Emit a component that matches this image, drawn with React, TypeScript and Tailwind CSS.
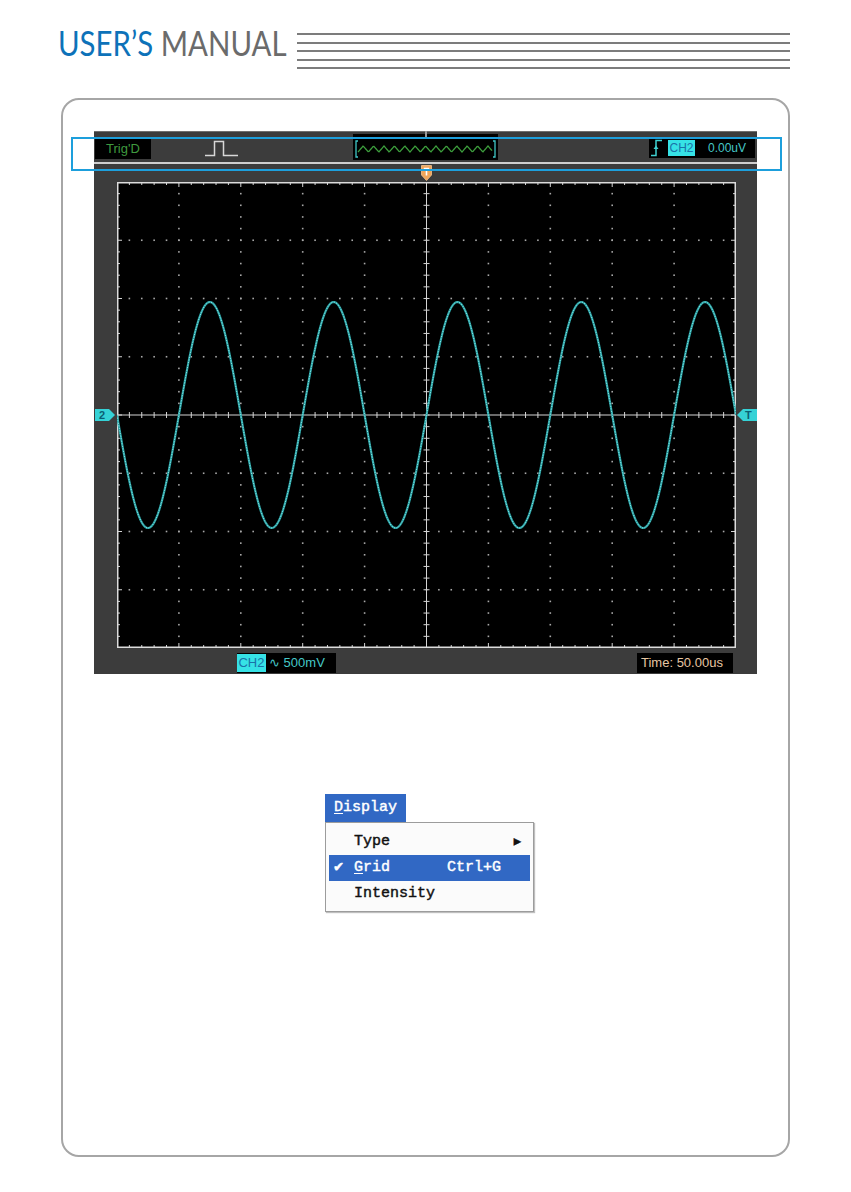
import React from "react";

const GW = 619;
const GH = 466;
const DX = GW / 10;
const DY = GH / 8;

function ScopeGrid() {
  const dots: React.ReactElement[] = [];
  // dotted minor lines
  for (let i = 1; i < 10; i++) {
    if (i === 5) continue;
    const x = i * DX;
    for (let k = 1; k < 40; k++) {
      const y = (k * DY) / 5;
      dots.push(<rect key={`v${i}-${k}`} x={x - 0.8} y={y - 0.8} width={1.6} height={1.6} fill="#a8a8a8" />);
    }
  }
  for (let j = 1; j < 8; j++) {
    if (j === 4) continue;
    const y = j * DY;
    for (let k = 1; k < 50; k++) {
      const x = (k * DX) / 5;
      dots.push(<rect key={`h${j}-${k}`} x={x - 0.8} y={y - 0.8} width={1.6} height={1.6} fill="#a8a8a8" />);
    }
  }
  const ticks: React.ReactElement[] = [];
  for (let k = 1; k < 50; k++) {
    const x = (k * DX) / 5;
    const major = k % 5 === 0;
    const len = major ? 5 : 3;
    ticks.push(<line key={`tt${k}`} x1={x} y1={0} x2={x} y2={len} />);
    ticks.push(<line key={`tb${k}`} x1={x} y1={GH} x2={x} y2={GH - len} />);
    ticks.push(<line key={`tc${k}`} x1={x} y1={GH / 2 - 3} x2={x} y2={GH / 2 + 3} />);
  }
  for (let k = 1; k < 40; k++) {
    const y = (k * DY) / 5;
    const major = k % 5 === 0;
    const len = major ? 5 : 3;
    ticks.push(<line key={`tl${k}`} x1={0} y1={y} x2={len} y2={y} />);
    ticks.push(<line key={`tr${k}`} x1={GW} y1={y} x2={GW - len} y2={y} />);
    ticks.push(<line key={`tm${k}`} x1={GW / 2 - 3} y1={y} x2={GW / 2 + 3} y2={y} />);
  }
  const period = 2 * DX;
  const amp = 113;
  const pts: string[] = [];
  for (let x = 0; x <= GW; x += 1) {
    const y = GH / 2 - amp * Math.sin((2 * Math.PI * (x - GW / 2)) / period);
    pts.push(`${x},${y.toFixed(2)}`);
  }
  const wave = pts.join(" ");
  return (
    <svg width={GW} height={GH} viewBox={`0 0 ${GW} ${GH}`} className="block bg-black shrink-0">
      {dots}
      <g stroke="#d4d4d4" strokeWidth={1}>
        <line x1={0} y1={GH / 2} x2={GW} y2={GH / 2} />
        <line x1={GW / 2} y1={0} x2={GW / 2} y2={GH} />
        {ticks}
      </g>
      <rect x={0.75} y={0.75} width={GW - 1.5} height={GH - 1.5} fill="none" stroke="#dcdcdc" strokeWidth={1.5} />
      <polyline points={wave} fill="none" stroke="#2a9fa2" strokeWidth={2.2} strokeLinejoin="round" />
      <polyline points={wave} fill="none" stroke="#86e8e8" strokeWidth={1} strokeDasharray="1.2 1.4" />
    </svg>
  );
}

function PulseIcon() {
  return (
    <svg width="33" height="17" viewBox="0 0 33 17" className="block">
      <path d="M0 15.5 H9.5 V1.5 H18.5 V15.5 H33" fill="none" stroke="#d8d8d8" strokeWidth="1.5" />
    </svg>
  );
}

function PreviewWave() {
  const pts: string[] = [];
  for (let x = 0; x <= 134; x += 1) {
    const ph = (x / 10.4) % 1;
    const tri = ph < 0.5 ? ph * 4 - 1 : 3 - ph * 4;
    pts.push(`${x},${(8 - 3 * tri).toFixed(2)}`);
  }
  return (
    <svg width="145" height="26" viewBox="0 0 145 26" className="block">
      <path d="M5 7 H3 V23 H5" fill="none" stroke="#3fc6c6" strokeWidth="1.3" />
      <path d="M140 7 H142 V23 H140" fill="none" stroke="#3fc6c6" strokeWidth="1.3" />
      <g transform="translate(5,7)">
        <polyline points={pts.join(" ")} fill="none" stroke="#3d9f3d" strokeWidth="1.3" />
      </g>
    </svg>
  );
}

function EdgeIcon() {
  return (
    <svg width="12" height="18" viewBox="0 0 12 18" className="block">
      <path d="M0 16.5 H5 V1.5 H11" fill="none" stroke="#3fd0d0" strokeWidth="1.5" />
      <path d="M2.5 10 L5 6.5 L7.5 10 Z" fill="#3fd0d0" />
    </svg>
  );
}

function TriggerMark() {
  return (
    <svg width="11" height="16" viewBox="0 0 11 16" className="block">
      <path d="M0.5 0.5 H10.5 V10 L5.5 15.5 L0.5 10 Z" fill="#efa55a" stroke="#f7c48e" strokeWidth="0.8" />
      <path d="M2.8 3.5 H8.2 M5.5 3.5 V10.5" stroke="#ffffff" strokeWidth="1.6" />
    </svg>
  );
}

function SideMark({ label, dir }: { label: string; dir: "right" | "left" }) {
  const d = dir === "right" ? "M0 0 H14 L20 6 L14 12 H0 Z" : "M20 0 H6 L0 6 L6 12 H20 Z";
  return (
    <div className="relative w-[20px] h-[12px]">
      <svg width="20" height="12" viewBox="0 0 20 12" className="absolute inset-0">
        <path d={d} fill="#35d2d6" />
      </svg>
      <span
        className={`absolute top-0 ${dir === "right" ? "left-[4px]" : "left-[8px]"} text-[11px] leading-[12px] font-bold text-[#0b5f73] font-['Liberation_Sans',Arial,sans-serif]`}
      >
        {label}
      </span>
    </div>
  );
}

function Scope() {
  return (
    <div className="ml-[31px] mt-[31px] w-[663px] h-[543px] bg-[#3c3c3c] border-t border-[#6e6e6e] flex flex-col font-['Liberation_Sans',Arial,sans-serif]">
      {/* status bar */}
      <div className="h-[30px] flex items-end pb-[2px] relative">
        <div className="ml-[1px] mb-[1px] w-[56px] h-[21px] bg-black flex items-center pl-[11px] text-[13px] text-[#3f9a3f]">
          Trig'D
        </div>
        <div className="ml-[54px] mb-[3px]">
          <PulseIcon />
        </div>
        <div className="ml-[115px] relative w-[145px] h-[26px] bg-black">
          <div className="absolute left-[72px] -top-[3px] w-[2px] h-[7px] bg-[#9a9a9a]" />
          <PreviewWave />
        </div>
        <div className="ml-auto mr-[2px] mb-[2px] w-[106px] h-[21px] bg-black flex items-center pl-[2px]">
          <EdgeIcon />
          <div className="ml-[5px] h-[16px] w-[27px] bg-[#36e2e6] text-[#1a72a8] text-[12px] leading-[16px] text-center">
            CH2
          </div>
          <span className="ml-[13px] text-[12px] text-[#45c8c8]">0.00uV</span>
        </div>
      </div>
      <div className="h-[2px] bg-[#cfcfcf]" />
      {/* trigger position */}
      <div className="h-[18px] flex items-start pt-[1px] pl-[23px]">
        <div className="w-[619px] flex justify-center">
          <TriggerMark />
        </div>
      </div>
      {/* screen */}
      <div className="flex items-center">
        <div className="w-[23px] pl-[1px]">
          <SideMark label="2" dir="right" />
        </div>
        <ScopeGrid />
        <div className="w-[21px] pl-[1px]">
          <SideMark label="T" dir="left" />
        </div>
      </div>
      {/* bottom readouts */}
      <div className="flex-1 flex items-start pt-[5px]">
        <div className="ml-[143px] w-[99px] h-[20px] bg-black flex items-center">
          <div className="h-[18px] w-[29px] bg-[#36e2e6] text-[#1a72a8] text-[13px] leading-[18px] text-center">CH2</div>
          <span className="ml-[3px] text-[13px] text-[#45c8c8]">∿ 500mV</span>
        </div>
        <div className="ml-[301px] w-[96px] h-[20px] bg-black flex items-center pl-[4px] text-[13px] text-[#e7c6a2]">
          Time: 50.00us
        </div>
      </div>
    </div>
  );
}

function DisplayMenu() {
  return (
    <div className="ml-[262px] mt-[120px] w-[209px] font-['Liberation_Mono','Courier_New',monospace] text-[15px] text-[#111] [-webkit-text-stroke:0.45px_currentColor]">
      <div className="w-[81px] h-[28px] bg-[#3168c4] text-white flex items-center pl-[9px]">
        <span className="underline underline-offset-2">D</span>isplay
      </div>
      <div className="h-[90px] bg-[#fbfbfb] border border-[#9c9c9c] shadow-[1px_1px_1px_rgba(0,0,0,0.25)] px-[3px] pt-[6px] flex flex-col">
        <div className="h-[26px] flex items-center pl-[25px] pr-[9px]">
          <span>Type</span>
          <span className="ml-auto text-[12px]">▶</span>
        </div>
        <div className="h-[26px] flex items-center bg-[#3168c4] text-white">
          <span className="w-[25px] pl-[5px] text-[15px]">✔</span>
          <span className="w-[93px]">
            <span className="underline underline-offset-2">G</span>rid
          </span>
          <span>Ctrl+G</span>
        </div>
        <div className="h-[27px] flex items-center pl-[25px]">Intensity</div>
      </div>
    </div>
  );
}

export default function App() {
  return (
    <div className="w-[851px] h-[1192px] bg-white overflow-hidden font-['Liberation_Sans',Arial,sans-serif]">
      <header className="h-[98px] flex items-start pl-[58px]">
        <h1 className="mt-[25px] w-[227px] shrink-0 text-[35px] leading-none font-['Lato','Liberation_Sans',Arial,sans-serif] font-normal whitespace-nowrap">
          <span className="inline-block origin-left scale-x-[0.84]">
            <span className="text-[#0d72b9]">USER’S</span> <span className="text-[#6b6b6b]">MANUAL</span>
          </span>
        </h1>
        <div className="ml-[12px] mt-[33px] w-[493px] shrink-0 flex flex-col gap-[6.5px]">
          <div className="h-[2px] bg-[#7c7c7c]" />
          <div className="h-[2px] bg-[#7c7c7c]" />
          <div className="h-[2px] bg-[#7c7c7c]" />
          <div className="h-[2px] bg-[#7c7c7c]" />
          <div className="h-[2px] bg-[#7c7c7c]" />
        </div>
      </header>
      <section className="relative ml-[61px] w-[729px] h-[1059px] rounded-[18px] border-2 border-[#a6a6a6]">
        <Scope />
        <DisplayMenu />
        <div className="absolute left-[8px] top-[37px] w-[711px] h-[34px] border-2 border-[#1d9fdc]" />
      </section>
    </div>
  );
}
